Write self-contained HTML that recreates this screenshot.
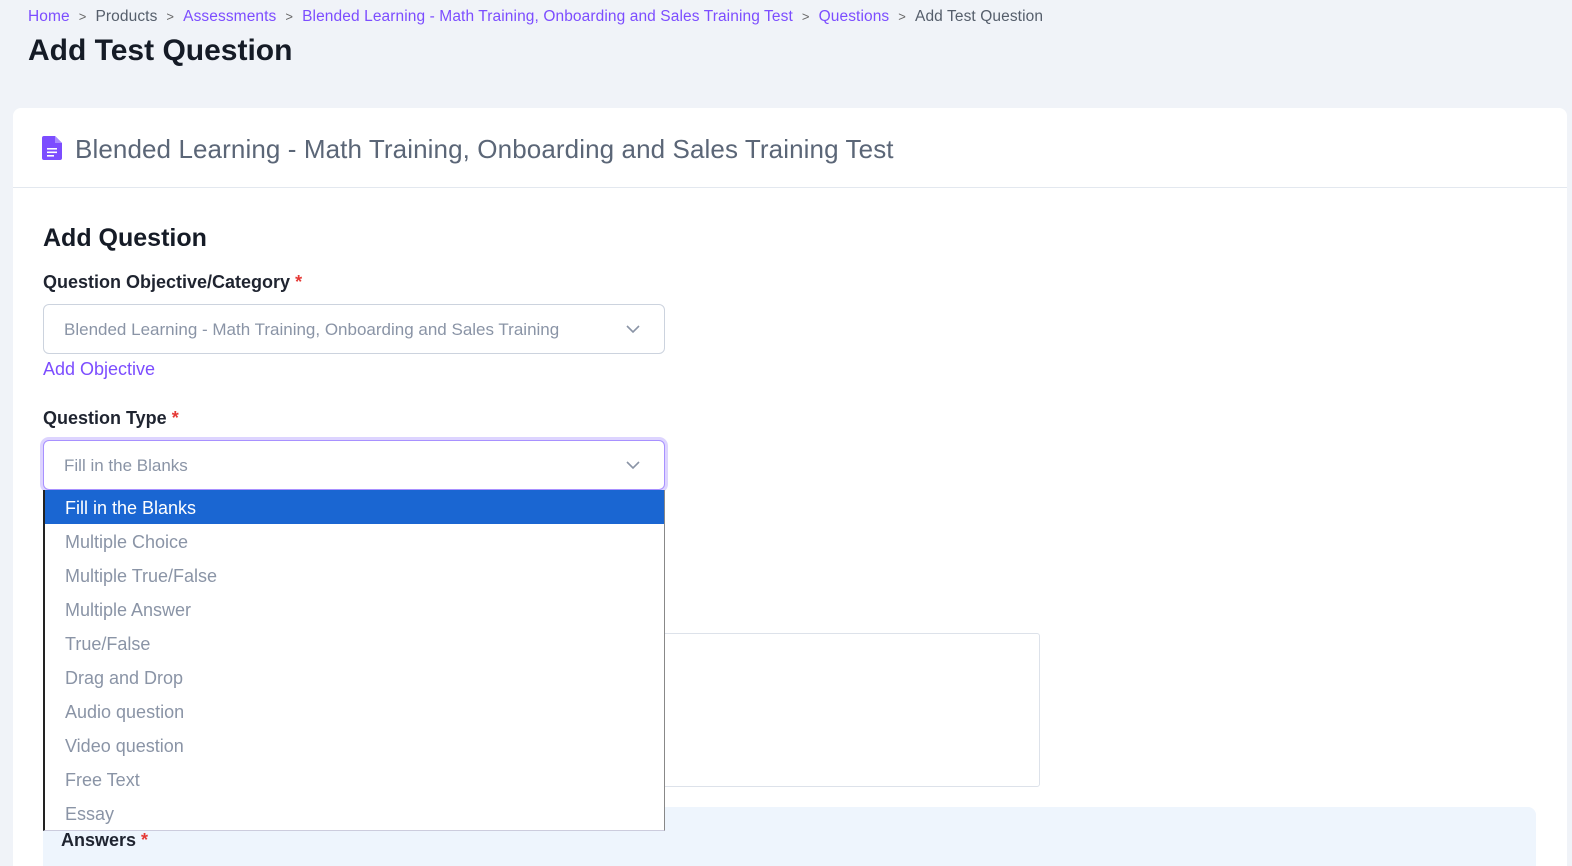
<!DOCTYPE html>
<html style="overflow:hidden"><head><style>
*{box-sizing:border-box;margin:0;padding:0}
html,body{width:1572px;height:866px;overflow:hidden}
body{background:#f0f3f8;font-family:"Liberation Sans",sans-serif;position:relative}
.a{position:absolute;white-space:nowrap}
.bc{top:8px;left:28px;font-size:15.5px;color:#555e6b;letter-spacing:0.1px}
.bc a{color:#7c4dff;text-decoration:none}
.bc .s{color:#666;margin:0 9px;font-size:13px}
.card{position:absolute;left:13px;top:108px;width:1554px;height:758px;background:#fff;border-radius:8px 8px 0 0}
.hdr{height:80px;border-bottom:1px solid #e3e8ef}
.sel{position:absolute;left:43px;width:622px;height:50px;border:1px solid #ccd3de;border-radius:6px;background:#fff;font-size:17px;color:#8a94a6;padding:15px 20px}
.chev{position:absolute;right:24px;top:19px}
.lbl{font-size:18px;font-weight:bold;color:#1f2430}
.lbl b{color:#e53935}
.dd{position:absolute;left:43px;top:490px;width:622px;height:341px;background:#fff;border-left:2px solid #222;border-right:1px solid #888;border-bottom:1px solid #ccd}
.dd div{height:34px;line-height:36px;padding-left:20px;font-size:18px;color:#8a94a6}
.dd div.on{background:#1a66d2;color:#fff}
</style></head><body>
<div class="a bc"><a>Home</a><span class="s">&gt;</span>Products<span class="s">&gt;</span><a>Assessments</a><span class="s">&gt;</span><a>Blended Learning - Math Training, Onboarding and Sales Training Test</a><span class="s">&gt;</span><a>Questions</a><span class="s">&gt;</span>Add Test Question</div>
<div class="a" style="top:34px;left:28px;font-size:30px;font-weight:bold;color:#151b26">Add Test Question</div>
<div class="card"><div class="hdr"></div></div>
<svg class="a" style="left:42px;top:136px" width="20" height="24" viewBox="0 0 20 24"><path d="M2 0h11l7 7v15a2 2 0 0 1-2 2H2a2 2 0 0 1-2-2V2a2 2 0 0 1 2-2z" fill="#7c4dff"/><path d="M13 0v7h7" fill="#a88bff"/><rect x="5" y="12" width="10" height="1.6" fill="#fff"/><rect x="5" y="15.5" width="10" height="1.6" fill="#fff"/><rect x="5" y="19" width="7" height="1.6" fill="#fff"/></svg>
<div class="a" style="left:75px;top:134px;font-size:26px;color:#5b6677;letter-spacing:0.1px">Blended Learning - Math Training, Onboarding and Sales Training Test</div>
<div class="a" style="left:43px;top:224px;font-size:25px;font-weight:bold;color:#151b26">Add Question</div>
<div class="a lbl" style="left:43px;top:272px">Question Objective/Category <b>*</b></div>
<div class="sel" style="top:304px">Blended Learning - Math Training, Onboarding and Sales Training<svg class="chev" width="14" height="10" viewBox="0 0 14 10"><path d="M1 2l6 6 6-6" stroke="#8a94a6" stroke-width="1.6" fill="none"/></svg></div>
<div class="a" style="left:43px;top:359px;font-size:18px;color:#7c4dff">Add Objective</div>
<div class="a lbl" style="left:43px;top:408px">Question Type <b>*</b></div>
<div class="sel" style="top:440px;border:1px solid #a891ff;box-shadow:0 0 0 3px #ddd4ff">Fill in the Blanks<svg class="chev" width="14" height="10" viewBox="0 0 14 10"><path d="M1 2l6 6 6-6" stroke="#8a94a6" stroke-width="1.6" fill="none"/></svg></div>
<div class="a" style="left:660px;top:633px;width:380px;height:154px;border:1px solid #dde2ea;border-radius:3px"></div>
<div class="a" style="left:43px;top:807px;width:1493px;height:59px;background:#eef5fd;border-radius:8px 8px 0 0"></div>
<div class="a lbl" style="left:61px;top:830px">Answers <b>*</b></div>
<div class="dd">
<div class="on">Fill in the Blanks</div><div>Multiple Choice</div><div>Multiple True/False</div><div>Multiple Answer</div><div>True/False</div><div>Drag and Drop</div><div>Audio question</div><div>Video question</div><div>Free Text</div><div>Essay</div>
</div>
</body></html>
